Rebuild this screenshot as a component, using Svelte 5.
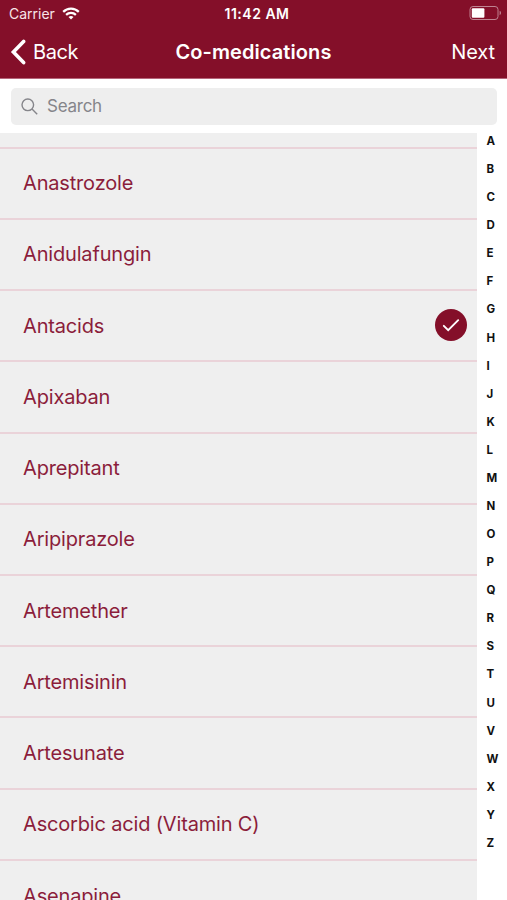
<script lang="ts">
  type Medication = { name: string; selected: boolean };

  let query = $state('');

  let medications = $state<Medication[]>([
    { name: 'Anastrozole', selected: false },
    { name: 'Anidulafungin', selected: false },
    { name: 'Antacids', selected: true },
    { name: 'Apixaban', selected: false },
    { name: 'Aprepitant', selected: false },
    { name: 'Aripiprazole', selected: false },
    { name: 'Artemether', selected: false },
    { name: 'Artemisinin', selected: false },
    { name: 'Artesunate', selected: false },
    { name: 'Ascorbic acid (Vitamin C)', selected: false },
    { name: 'Asenapine', selected: false },
  ]);

  const letters = 'ABCDEFGHIJKLMNOPQRSTUVWXYZ'.split('');

  let visible = $derived(
    medications.filter(m => m.name.toLowerCase().includes(query.toLowerCase()))
  );
</script>

<div class="screen">
  <header>
    <div class="status">
      <div class="carrier">
        <span>Carrier</span>
        <svg width="18" height="13" viewBox="0 0 18 13" fill="none" stroke="#fff" stroke-width="2.2">
          <path d="M1.2 4.9 A11 11 0 0 1 16.8 4.9" />
          <path d="M4.1 7.9 A7 7 0 0 1 13.9 7.9" />
          <path d="M9 12.6 L6.5 10.1 A3.6 3.6 0 0 1 11.5 10.1 Z" fill="#fff" stroke="none" />
        </svg>
      </div>
      <span class="time">11:42 AM</span>
      <svg class="battery" width="33" height="15" viewBox="0 0 33 15">
        <rect x="1" y="0.5" width="28" height="13" rx="3" fill="none" stroke="#bf8391" stroke-width="1" />
        <rect x="2.8" y="2.2" width="12.6" height="9.6" rx="1" fill="#fff" />
        <path d="M30.6 4.8 a2.4 2.4 0 0 1 0 4.4 z" fill="#bf8391" />
      </svg>
    </div>
    <nav>
      <button class="back">
        <svg width="16" height="26" viewBox="0 0 16 26" fill="none" stroke="#fff" stroke-width="3.6" stroke-linecap="round">
          <path d="M13.6 2.4 L3.4 13 L13.6 23.6" />
        </svg>
        <span>Back</span>
      </button>
      <h1>Co-medications</h1>
      <button class="next">Next</button>
    </nav>
  </header>

  <div class="search">
    <label>
      <svg width="17" height="17" viewBox="0 0 17 17" fill="none" stroke="#85858a" stroke-width="1.4">
        <circle cx="6.8" cy="6.8" r="5.8" />
        <path d="M11 11 L16.2 16.2" />
      </svg>
      <input placeholder="Search" bind:value={query} />
    </label>
  </div>

  <main>
    <ul class="list">
      {#each visible as med (med.name)}
        <li>
          <button class="row" onclick={() => med.selected = !med.selected}>
            <span>{med.name}</span>
            {#if med.selected}
              <svg class="check" width="32" height="32" viewBox="0 0 32 32" fill="none">
                <circle cx="16" cy="16" r="16" fill="#840f29" />
                <path d="M8.8 16.8 L13.2 21.2 L23.2 11.2" stroke="#fff" stroke-width="1.9" stroke-linecap="round" />
              </svg>
            {/if}
          </button>
        </li>
      {/each}
    </ul>
    <div class="index">
      {#each letters as letter (letter)}
        <span>{letter}</span>
      {/each}
    </div>
  </main>
</div>

<style>
  :global(body) { margin: 0; overflow: hidden; }
  .screen {
    width: 507px; height: 900px; overflow: hidden;
    display: flex; flex-direction: column; background: #fff;
    font-family: Inter, "Liberation Sans", sans-serif;
  }
  button {
    border: none; background: transparent; padding: 0;
    font: inherit; color: inherit; cursor: pointer;
  }
  svg { display: block; flex-shrink: 0; }

  header {
    box-sizing: border-box; height: 79px; flex-shrink: 0;
    background: #840f29; border-bottom: 1px solid #b5657a; background-clip: padding-box; color: #fff;
  }
  .status {
    display: grid; grid-template-columns: 1fr auto 1fr; align-items: center;
    height: 27px; padding: 0 7px 0 9px; font-size: 14px;
  }
  .carrier { display: flex; align-items: center; gap: 7px; color: #f8e4e8; }
  .time { font-weight: 600; font-size: 14px; letter-spacing: 0.5px; margin-left: 5px; }
  .battery { justify-self: end; margin-right: -2px; }
  nav {
    display: grid; grid-template-columns: 1fr auto 1fr; align-items: center;
    height: 50px; padding: 0 12px 0 10px; font-size: 20px;
  }
  .back { display: flex; align-items: center; gap: 7px; letter-spacing: -0.4px; }
  h1 { margin: 0 0 0 2px; font-size: 20px; font-weight: 600; letter-spacing: 0.08px; }
  .next { justify-self: end; letter-spacing: -0.1px; }

  .search { padding: 8.5px 10px 8.5px 11px; flex-shrink: 0; }
  .search label {
    display: flex; align-items: center; gap: 9px;
    height: 37px; padding: 0 10px; border-radius: 5px; background: #eee;
  }
  .search input {
    flex: 1; border: none; outline: none; padding: 0; background: transparent;
    font: inherit; font-size: 17px; color: #333; letter-spacing: -0.25px;
  }
  .search input::placeholder { color: #85858a; opacity: 1; }

  main { display: flex; flex: 1; min-height: 0; }
  .list {
    flex: 1; margin: 0; padding: 13.6px 0 0; list-style: none;
    background: #efefef; overflow: hidden;
  }
  .row {
    display: flex; align-items: center; justify-content: space-between;
    box-sizing: border-box; width: 100%; height: 71.24px;
    padding: 0 10px 0 23px; border-top: 2px solid #ead3d9;
    font-size: 20px; letter-spacing: -0.17px; color: #8b1d3b; text-align: left;
  }
  .check { margin-top: -1px; }
  .index {
    display: flex; flex-direction: column; width: 20.5px; padding-left: 10px;
    font-size: 11.5px; font-weight: 700; color: #111;
  }
  .index span { height: 28.08px; line-height: 16px; flex-shrink: 0; }
</style>
